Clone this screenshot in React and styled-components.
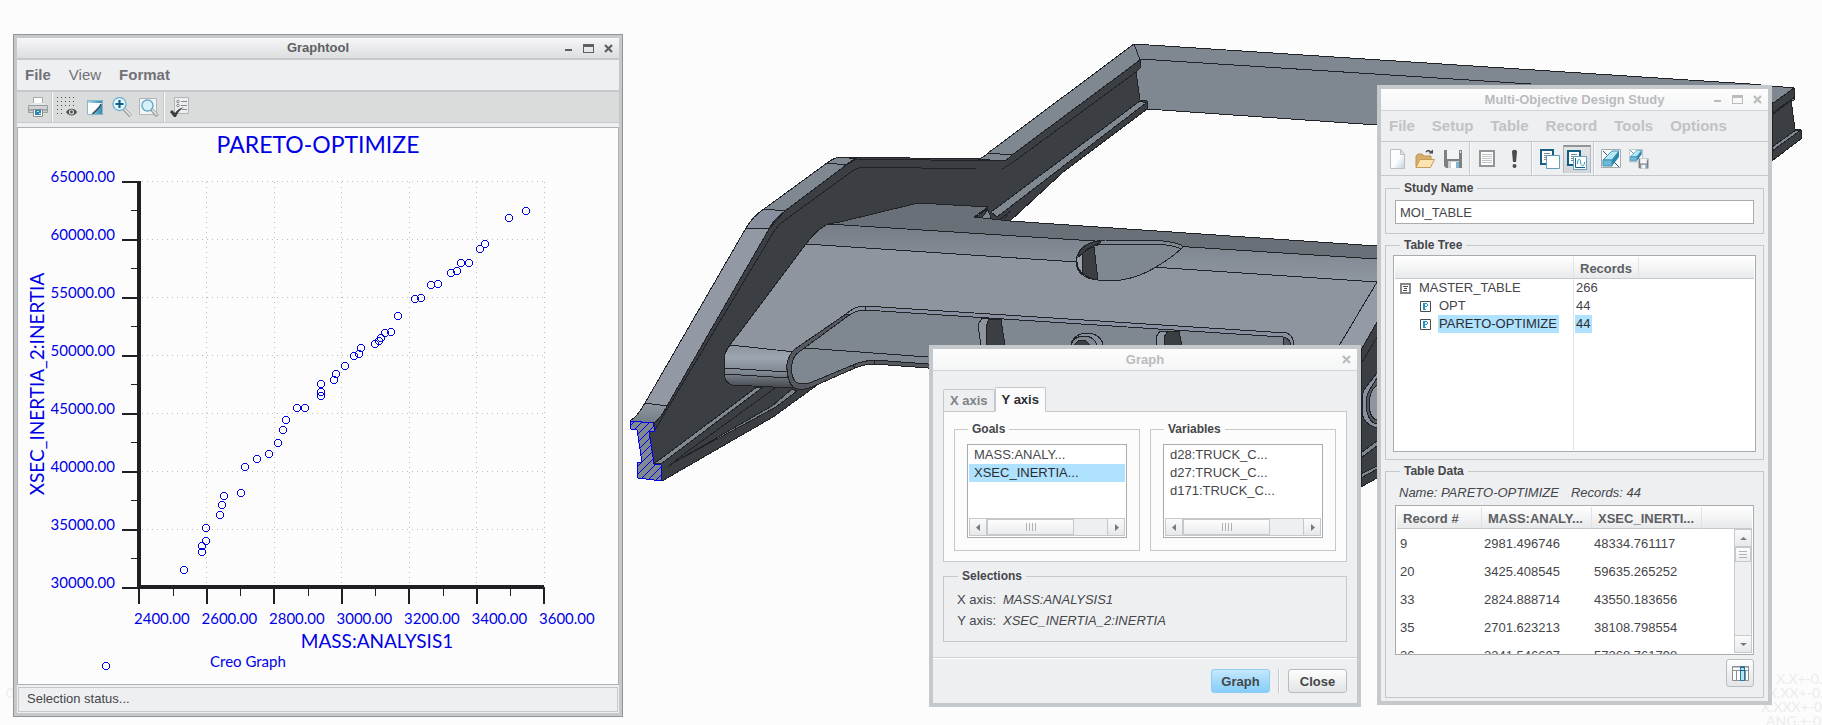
import React, { useState } from 'react';
import styled, { createGlobalStyle, css } from 'styled-components';

const GlobalStyle = createGlobalStyle`
  *, *:before, *:after {
    box-sizing: border-box;
  }

  body {
    margin: 0;
    background: #fcfcfc;
    color: #45464a;
    font-family: 'Liberation Sans', Arial, sans-serif;
    font-size: 13px;
    line-height: 18px;
  }

  button, input {
    font-family: inherit;
    color: inherit;
  }

  button {
    padding: 0;
    border: 0;
    background: none;
  }
`;

const StyledDesktop = styled.main`
  position: relative;
  min-height: 100vh;
  overflow: hidden;
`;
const StyledModel = styled.svg`
  position: absolute;
  inset: 0;
  width: 100%;
  height: 100%;

  .note {
    font-family: Lato, sans-serif;
    font-size: 14px;
    fill: #ececee;
  }
`;

/* windows */
const StyledWindow = styled.section`
  position: absolute;
  left: ${({ $left }) => $left}px;
  top: ${({ $top }) => $top}px;
  width: ${({ $width }) => $width}px;
  background: #eeeff1;
  border: 4px solid #c5c9cc;

  ${({ $active }) =>
    $active &&
    css`
      border-width: 3px;
      outline: 1px solid #929598;
    `}
`;
const StyledTitleBar = styled.header`
  display: grid;
  grid-template-columns: 1fr auto 1fr;
  align-items: center;
  height: 22px;
  border-bottom: ${({ $active }) => ($active ? '2px solid #c5c9cc' : '1px solid #d3d6d9')};
  background: ${({ $active }) =>
    $active ? 'linear-gradient(#f6f6f7, #dcdee0)' : 'linear-gradient(#fdfdfd, #f4f5f6)'};
  color: ${({ $active }) => ($active ? '#5d5f63' : '#b9bbbe')};

  h1 {
    grid-column: 2;
    margin: 0;
    font-size: 13px;
    line-height: 18px;
  }

  div {
    display: flex;
    justify-content: flex-end;
    padding-right: 1px;
  }

  button {
    display: grid;
    place-items: center;
    width: 20px;
    height: 18px;
  }
`;
const StyledMenuBar = styled.nav`
  display: flex;
  align-items: center;
  gap: ${({ $active }) => ($active ? 18 : 17)}px;
  height: ${({ $active }) => ($active ? 32 : 31)}px;
  padding-left: 8px;
  border-bottom: ${({ $active }) => ($active ? 2 : 1)}px solid #c5c9cc;
`;
const StyledMenuItem = styled.button`
  color: ${({ $dim }) => ($dim ? '#c0c2c5' : '#717276')};
  font-size: 15px;
  font-weight: ${({ $light }) => ($light ? 400 : 700)};
  line-height: 18px;
`;
const StyledToolbar = styled.div`
  display: flex;
  align-items: center;
  height: ${({ $dark }) => ($dark ? 31 : 34)}px;
  padding-left: ${({ $dark }) => ($dark ? 7 : 3)}px;
  border-bottom: 1px solid #c5c9cc;
  background: ${({ $dark }) => ($dark ? '#dadcdb' : '#eeeff1')};
`;
const StyledDivider = styled.span`
  align-self: stretch;
  width: 2px;
  margin: 0 ${({ $gap = 1 }) => $gap}px;
  border-left: 1px solid #c5c9cc;
  border-right: 1px solid #fbfbfb;
`;
const StyledTool = styled.button`
  display: grid;
  place-items: center;
  width: ${({ $wide }) => ($wide ? 28 : 27)}px;
  height: 28px;

  ${({ $pressed }) =>
    $pressed &&
    css`
      border: 1px solid #b4b7ba;
      border-top: 2px solid #929598;
      border-bottom: 0;
      background: linear-gradient(#e3e5e7, #d3d6d8);
    `}
`;
const StyledGroup = styled.fieldset`
  min-width: 0;
  margin: 0;
  padding: ${({ $pad }) => $pad};
  border: 1px solid #c5c9cc;

  legend {
    margin-left: ${({ $indent = 5 }) => $indent}px;
    padding: 0 4px;
    font-size: 12px;
    font-weight: 700;
    line-height: 14px;
  }
`;
const StyledButton = styled.button`
  min-width: 59px;
  height: 24px;
  border: 1px solid ${({ $primary }) => ($primary ? '#8fcdf3' : '#b9bcbf')};
  border-radius: 3px;
  background: ${({ $primary }) =>
    $primary ? 'linear-gradient(#c4e7fc, #85cefa)' : 'linear-gradient(#fdfdfd, #e3e4e6)'};
  font-size: 13px;
  font-weight: 700;
`;

/* graphtool */
const StyledPlot = styled.svg`
  display: block;
  width: 100%;
  margin-top: 4px;
  border: 1px solid #aeb1b4;
  background: #fcfcfc;

  text {
    font-family: Lato, sans-serif;
    font-size: 15px;
    fill: #0000e6;
  }

  .title {
    font-size: 23px;
  }

  .axis {
    font-size: 19px;
  }
`;
const StyledStatus = styled.footer`
  margin: 2px 1px 1px;
  padding: 2px 8px 3px;
  border: 1px solid #c5c9cc;
`;

/* graph dialog */
const StyledDialogBody = styled.div`
  display: flex;
  flex-direction: column;
  gap: 7px;
  padding: 16px 10px 15px;
`;
const StyledTabs = styled.div`
  display: flex;
  align-items: flex-end;
  height: 25px;
  margin-bottom: -1px;
`;
const StyledTab = styled.button`
  position: relative;
  height: ${({ $on }) => ($on ? 25 : 23)}px;
  padding: 0 6px;
  border: 1px solid #c5c9cc;
  border-bottom-color: ${({ $on }) => ($on ? '#fcfcfc' : '#c5c9cc')};
  border-radius: 2px 2px 0 0;
  background: ${({ $on }) => ($on ? '#fcfcfc' : '#eeeff1')};
  color: ${({ $on }) => ($on ? '#2b2c2f' : '#7f8185')};
  font-size: 13px;
  font-weight: 700;
`;
const StyledTabPanel = styled.div`
  display: grid;
  grid-template-columns: 1fr 1fr;
  gap: 10px;
  padding: 10px;
  border: 1px solid #c5c9cc;
  background: #fcfcfc;
`;
const StyledList = styled.div`
  display: flex;
  flex-direction: column;
  height: 94px;
  padding: 1px;
  border: 1px solid #a9acaf;
  background: #fff;

  ul {
    flex: 1;
    margin: 0;
    padding: 0;
    list-style: none;
  }
`;
const StyledListItem = styled.li`
  padding-left: 5px;
  background: ${({ $on }) => ($on ? '#afe2ff' : 'transparent')};
  color: ${({ $on }) => ($on ? '#2b2c2f' : 'inherit')};
`;
const StyledScroll = styled.div`
  display: flex;
  flex-direction: ${({ $vertical }) => ($vertical ? 'column' : 'row')};
  border: 1px solid #c5c9cc;
  background: #eeeff1;

  > button {
    display: grid;
    place-items: center;
    flex: 0 0 16px;
    min-height: 16px;
    background: linear-gradient(#fafafb, #e6e8ea);
  }

  > div {
    flex: 1;
    border: solid #c5c9cc;
    border-width: ${({ $vertical }) => ($vertical ? '1px 0' : '0 1px')};
  }

  > div > span {
    display: grid;
    place-items: center;
    width: ${({ $vertical }) => ($vertical ? '100%' : '87px')};
    height: ${({ $vertical }) => ($vertical ? '15px' : '100%')};
    border: 1px solid #c5c9cc;
    background: linear-gradient(#fdfdfd, #ebecee);
  }
`;
const StyledSelections = styled.dl`
  display: grid;
  grid-template-columns: 39px 1fr;
  column-gap: 7px;
  margin: 0;
  line-height: 21px;
  white-space: nowrap;

  dt {
    justify-self: end;
  }

  dd {
    margin: 0;
    font-style: italic;
  }
`;
const StyledDialogFooter = styled.footer`
  display: flex;
  justify-content: flex-end;
  gap: 8px;
  padding: 11px 10px 10px;
  border-top: 1px solid #d0d3d6;
  box-shadow: inset 0 1px #fff;
`;

/* design study */
const StyledStudyBody = styled.div`
  display: flex;
  flex-direction: column;
  gap: 4px;
  padding: 5px 4px 3px;
`;
const StyledInput = styled.input`
  display: block;
  width: 100%;
  height: 24px;
  padding: 0 4px;
  border: 1px solid #a9acaf;
  background: #fff;
  font-size: 13px;
`;
const StyledTableBox = styled.div`
  position: relative;
  height: ${({ $height }) => $height}px;
  overflow: hidden;
  padding: 1px;
  border: 1px solid #a9acaf;
  background: #fff;

  table {
    width: 100%;
    border-collapse: separate;
    border-spacing: 0;
    table-layout: fixed;
  }

  th {
    height: 22px;
    padding: 2px 6px 0;
    border-bottom: 1px solid #c5c9cc;
    background: linear-gradient(#fff, #e8e9eb);
    color: #5d5f63;
    text-align: left;
    white-space: nowrap;
    line-height: 18px;
  }

  th + th {
    border-left: 1px solid #e0e2e4;
  }
`;
const StyledScrollSlot = styled.div`
  position: absolute;
  top: 23px;
  right: 1px;
  bottom: 1px;
  display: grid;
  width: 18px;
`;
const StyledTreeTable = styled.table`
  height: 100%;

  td {
    height: 18px;
    padding: 0;
    line-height: 18px;
    white-space: nowrap;
  }

  td + td {
    padding-left: 1px;
    border-left: 1px solid #e0e2e4;
  }

  tr:last-child td {
    height: auto;
  }
`;
const StyledNode = styled.div`
  display: flex;
  align-items: center;
  gap: 7px;
  padding-left: ${({ $depth }) => 5 + $depth * 20}px;
`;
const StyledMark = styled.span`
  display: inline-block;
  padding: 0 2px 0 1px;
  background: ${({ $on }) => ($on ? '#afe2ff' : 'transparent')};
  color: ${({ $on }) => ($on ? '#2b2c2f' : 'inherit')};
`;
const StyledDataTable = styled.table`
  td {
    height: 28px;
    padding: 1px 3px 0;
  }
`;
const StyledCaption = styled.p`
  display: flex;
  gap: 12px;
  margin: 0 0 3px 4px;
  font-style: italic;
`;
const StyledColumnsButton = styled(StyledButton)`
  display: grid;
  place-items: center;
  min-width: 28px;
  height: 28px;
  margin: 4px 0 0 auto;
`;

const yTicks = ['65000.00', '60000.00', '55000.00', '50000.00', '45000.00', '40000.00', '35000.00', '30000.00'];
const xTicks = ['2400.00', '2600.00', '2800.00', '3000.00', '3200.00', '3400.00', '3600.00'];
const points = [
  [526, 211], [509, 218], [485, 244], [480, 249], [469, 263], [461, 263], [457, 271], [451, 273],
  [438, 284], [431, 285], [421, 298], [415, 299], [398, 316], [391, 332], [385, 333], [381, 338],
  [379, 341], [375, 344], [361, 348], [359, 354], [354, 356], [345, 366], [336, 374], [334, 380],
  [321, 384], [321, 392], [321, 396], [305, 408], [297, 408], [286, 420], [283, 430], [278, 443],
  [269, 454], [257, 459], [245, 467], [241, 493], [224, 496], [222, 505], [220, 515], [206, 528],
  [206, 541], [202, 546], [202, 552], [184, 570],
];
const goals = ['MASS:ANALY...', 'XSEC_INERTIA...'];
const variables = ['d28:TRUCK_C...', 'd27:TRUCK_C...', 'd171:TRUCK_C...'];
const tree = [
  { name: 'MASTER_TABLE', records: 266, depth: 0 },
  { name: 'OPT', records: 44, depth: 1 },
  { name: 'PARETO-OPTIMIZE', records: 44, depth: 1, on: true },
];
const records = [
  ['9', '2981.496746', '48334.761117'],
  ['20', '3425.408545', '59635.265252'],
  ['33', '2824.888714', '43550.183656'],
  ['35', '2701.623213', '38108.798554'],
  ['36', '3341.546607', '57268.761798'],
];

/* icons, all on a 20px grid */
const Icon = ({ children, size = 20 }) => (
  <svg width={size} height={size} viewBox={`0 0 ${size} ${size}`} fill="none" aria-hidden="true">
    {children}
  </svg>
);
const PrintIcon = () => (
  <Icon>
    <path d="M5.5 .5h9v7h-9z" fill="#fdfdfd" stroke="#a5a8ab" />
    <path d="M3 6h14v3H3z" fill="#e4e6e7" />
    <path d="M.5 8.5h19v7H.5z" fill="#cfd2d4" stroke="#9b9ea1" />
    <path d="M1 12h18v2H1z" fill="#a5a8aa" />
    <path d="M5.500 12.500h9v7h-9z" fill="#fff" stroke="#8b8e91" />
    <path d="M7 13h6v5H7z" fill="#2e86ab" />
    <path d="M9 14h2v1H9zM11 16h2v1h-2z" fill="#bfe6f5" />
  </Icon>
);
const GridIcon = () => (
  <Icon>
    {[0, 1, 2, 3, 4].map(r =>
      [0, 1, 2, 3, 4].map(c =>
        r > 2 && c > 1 ? null : (
          <rect key={`${r}-${c}`} x={c * 4} y={r * 4} width="1" height="1" fill="#4a4b4e" />
        )
      )
    )}
    <path d="M9 15c2.500-4.500 9-4.500 11 0c-2 4.500-8.500 4.500-11 0z" fill="#4a4b4e" />
    <circle cx="14.500" cy="15" r="2.600" fill="#dadcdb" />
    <circle cx="14.500" cy="15" r="1.400" fill="#4a4b4e" />
  </Icon>
);
const RepaintIcon = () => (
  <Icon>
    <defs>
      <linearGradient id="repaint" x1="0" x2="1">
        <stop offset="0" stopColor="#aee0f4" />
        <stop offset="1" stopColor="#2d86ad" />
      </linearGradient>
    </defs>
    <path d="M2 3h16v15H2z" fill="url(#repaint)" />
    <path d="M2 6h15c-1 5-5 7-9 11l-1 1H2z" fill="#fafcfd" />
    <path d="M16 7c-1 5-6 6-9 11" stroke="#2b4d5e" strokeWidth="1.500" />
    <path d="M2.500 3.500h15v14h-15z" stroke="#8fb5c5" />
  </Icon>
);
const ZoomInIcon = () => (
  <Icon>
    <path d="M12 12l6.500 7" stroke="#9b9ea1" strokeWidth="3.500" />
    <path d="M12.500 12l6 6.500" stroke="#e8e9ea" strokeWidth="1.500" />
    <circle cx="7.500" cy="7" r="6.500" fill="#e6f5fb" stroke="#6fb1cc" strokeWidth="1.300" />
    <path d="M7.500 3v8M3.500 7h8" stroke="#0f5f86" strokeWidth="2.200" />
  </Icon>
);
const RefitIcon = () => (
  <Icon>
    <path d="M.5 1.500h17v16H.5z" fill="#f4f5f6" stroke="#b1b4b6" />
    <path d="M12.500 12.500l6 6.500" stroke="#9b9ea1" strokeWidth="3.500" />
    <path d="M13 12.500l5 5.500" stroke="#e8e9ea" strokeWidth="1.500" />
    <circle cx="8.500" cy="8.500" r="5.500" fill="#d9f0f9" stroke="#63abc9" strokeWidth="1.400" />
  </Icon>
);
const OptionsIcon = () => (
  <Icon>
    <path d="M4.500 .5h14v16h-14z" fill="#eceef0" stroke="#b1b4b6" />
    <circle cx="8" cy="4.500" r="1.300" stroke="#85888b" />
    <circle cx="8" cy="8.500" r="1.300" stroke="#85888b" />
    <path d="M11 4.500h6M11 8.500h6M12 12.500h5" stroke="#85888b" />
    <path d="M0 15l2-2l3 3c2-3 5-5 9-6c-4 3-6 5-8 10H4z" fill="#3b3c3f" />
  </Icon>
);
const NewIcon = () => (
  <Icon>
    <defs>
      <linearGradient id="page" x1="0" y1="0" x2="1" y2="1">
        <stop offset="0" stopColor="#fff" />
        <stop offset=".55" stopColor="#fbfcfd" />
        <stop offset="1" stopColor="#bccfd9" />
      </linearGradient>
    </defs>
    <path d="M2.500 .5h10l4 5v14h-14z" fill="url(#page)" stroke="#b9bfc4" />
    <path d="M12.500 .5v5h4z" fill="#e4e8eb" stroke="#b9bfc4" />
  </Icon>
);
const OpenIcon = () => (
  <Icon>
    <path d="M1 18V7l2-2h4l2 2h7v3" fill="#d8ae6c" stroke="#bf914c" />
    <path d="M1 18.500l4-8h14.500l-4 8z" fill="#fbe3b4" stroke="#c79c58" />
    <path d="M11 3c2-2 4-1.500 5 1" stroke="#4a4b4e" strokeWidth="1.500" />
    <path d="M13.500 4.500h4.500v-4z" fill="#4a4b4e" />
  </Icon>
);
const Disk = () => (
  <>
    <path d="M1 1h18v18H3l-2-2z" fill="#7e8183" />
    <path d="M4 1h12v9H4z" fill="#f3f4f5" />
    <path d="M17 2h1v2h-1z" fill="#fff" />
    <path d="M5 12h11v7H5z" fill="#cfd2d4" />
    <path d="M8 13h5v6H8z" fill="#fff" />
    <path d="M13 13h3v6h-3z" fill="#7fb7d0" />
  </>
);
const SaveIcon = () => (
  <Icon>
    <Disk />
  </Icon>
);
const SheetIcon = () => (
  <Icon>
    <path d="M3 2h14v15H3z" fill="#fdfdfd" stroke="#929496" strokeWidth="2" />
    <path d="M5 5.500h10M5 7.500h10M5 9.500h10M5 11.500h10M5 13.500h10" stroke="#c3c5c7" />
  </Icon>
);
const RunIcon = () => (
  <Icon>
    <path d="M8 3c0-3 5-3 5 0l-1 10h-3z" fill="#4a4b4e" />
    <circle cx="10.500" cy="17" r="2" fill="#4a4b4e" />
  </Icon>
);
const TableBack = () => (
  <>
    <path d="M1 1h12v14H1z" fill="#fff" stroke="#135e82" strokeWidth="2" />
    <path d="M4 4.500h6M4 6.500h6M4 8.500h3M4 10.500h3" stroke="#85888b" />
  </>
);
const TablesIcon = () => (
  <Icon>
    <TableBack />
    <path d="M6.500 6.500h13v13h-13z" fill="#fff" stroke="#5f9fbe" />
  </Icon>
);
const TableGraphIcon = () => (
  <Icon>
    <TableBack />
    <path d="M6.500 6.500h13v13h-13z" fill="#fff" stroke="#5f9fbe" />
    <path d="M8.500 8v9.500H18" stroke="#135e82" />
    <path d="M10.500 14c0-6 3-6 3-2s4 6 4 0" stroke="#2e9ac4" />
  </Icon>
);
const Cube = () => (
  <>
    <path d="M.5 .5h19v18H.5z" fill="#fcfdfd" stroke="#a6a9ac" />
    <path d="M2 2l5 5M12 12l6 6" stroke="#1d5a76" />
    <path d="M2 11l9-9h7l-7 9z" fill="#b6e8f8" stroke="#3b8fb3" />
    <path d="M11 11l7-9v6l-7 9z" fill="#2f86ad" />
    <path d="M2 11h9v6H2z" fill="#6db9d8" stroke="#3b8fb3" />
  </>
);
const CubeIcon = () => (
  <Icon>
    <Cube />
  </Icon>
);
const CubeSaveIcon = () => (
  <Icon>
    <g transform="scale(.7)">
      <Cube />
    </g>
    <g transform="translate(9 9) scale(.55)">
      <Disk />
    </g>
  </Icon>
);
const ColumnsIcon = () => (
  <svg width="17" height="15" fill="none" aria-hidden="true">
    <path d="M.5 .5h16v14H.5z" fill="#fff" stroke="#8b8d90" />
    <path d="M0 1h17M0 4.500h17M4.500 4v10M13.500 4v10" stroke="#8b8d90" />
    <path d="M8.500 1.500h4v13h-4z" fill="#b9e2f4" stroke="#1b7ba5" />
    <path d="M8 4.500h5M8 1h5" stroke="#135e82" />
  </svg>
);
const MasterIcon = () => (
  <svg width="11" height="11" fill="none" aria-hidden="true">
    <path d="M1 1h9v9H1z" fill="#fff" stroke="#85878a" strokeWidth="2" />
    <path d="M3 3.500h5M4 5.500h3M3 7.500h4" stroke="#4a4b4e" />
  </svg>
);
const ParetoIcon = () => (
  <svg width="11" height="11" fill="none" aria-hidden="true">
    <path d="M.5 .5h10v10H.5z" fill="#fff" stroke="#4a4b4e" />
    <path d="M4 2v7" stroke="#1f96c4" strokeWidth="2" />
    <path d="M3 2.500h4M5 5.500h2M3 8.500h3M7.500 3v2" stroke="#1f96c4" />
  </svg>
);

const Controls = ({ closeOnly }) => (
  <div>
    {!closeOnly && (
      <>
        <button type="button" aria-label="Minimize">
          <svg width="9" height="9">
            <path d="M1 5h7v2H1z" fill="currentColor" />
          </svg>
        </button>
        <button type="button" aria-label="Maximize">
          <svg width="11" height="9">
            <path d="M0 0h11v9H0zM1 3v5h9V3z" fill="currentColor" fillRule="evenodd" />
          </svg>
        </button>
      </>
    )}
    <button type="button" aria-label="Close window">
      <svg width="9" height="9">
        <path d="M1 1l7 7M8 1L1 8" stroke="currentColor" strokeWidth="2.200" />
      </svg>
    </button>
  </div>
);

const arrows = {
  left: 'M6 1v7L2 4.500z',
  right: 'M3 1v7l4-3.500z',
  up: 'M1 6h7L4.500 3z',
  down: 'M1 3h7L4.500 6z',
};
const Arrow = ({ to }) => (
  <button type="button" aria-label={`Scroll ${to}`}>
    <svg width="9" height="9">
      <path d={arrows[to]} fill="#77797c" />
    </svg>
  </button>
);
const ScrollBar = ({ vertical }) => (
  <StyledScroll $vertical={vertical}>
    <Arrow to={vertical ? 'up' : 'left'} />
    <div>
      <span>
        <svg width="12" height="10">
          <path
            d={vertical ? 'M2 1.500h8M2 4.500h8M2 7.500h8' : 'M1.500 1v8M4.500 1v8M7.500 1v8M10.500 1v8'}
            stroke="#b0b3b6"
          />
        </svg>
      </span>
    </div>
    <Arrow to={vertical ? 'down' : 'right'} />
  </StyledScroll>
);

const Model = () => (
  <StyledModel viewBox="0 0 1822 725" preserveAspectRatio="xMinYMin slice" aria-hidden="true">
    <defs>
      <linearGradient id="band" x1="0" y1="0" x2="-.04" y2="1">
        <stop offset="0" stopColor="#767d86" />
        <stop offset="1" stopColor="#9098a2" />
      </linearGradient>
      <linearGradient id="tube" x1="0" y1="0" x2="0" y2="1">
        <stop offset="0" stopColor="#8c949e" />
        <stop offset=".3" stopColor="#9ca5b0" />
        <stop offset=".65" stopColor="#7d858f" />
        <stop offset="1" stopColor="#43464b" />
      </linearGradient>
      <linearGradient id="bend" x1="0" y1="0" x2="0" y2="1">
        <stop offset="0" stopColor="#8f97a2" />
        <stop offset="1" stopColor="#747c85" />
      </linearGradient>
      <pattern id="hatch" width="8" height="8" patternUnits="userSpaceOnUse">
        <path d="M0 0h8v8H0z" fill="#808890" />
        <path d="M-1 9L9-1" stroke="#0000e6" />
      </pattern>
    </defs>
    <g stroke="#202225" strokeWidth="1" strokeLinejoin="round" shapeRendering="crispEdges">
      {/* rear beam */}
      <path d="M1134 44L1750 84L1794 88V100L1772 103L1377 125L1147 109L1139 100L1135 72L1140 60z" fill="#7f8790" />
      <path d="M1140 59L1531 84" fill="none" />
      <path d="M1772 104L1794 88L1795 97L1791 100L1795 129L1801 130L1802 138L1772 161z" fill="#3b3e42" />
      <path d="M1795 97L1772 113M1792 100L1772 115" fill="none" />
      <path d="M1801 130H1796L1772 147V151z" fill="#7f8790" />
      {/* side rail web */}
      <path
        d="M1140 60L1141 67L1136 72L1140 100L1147 101L1147 109L1118 131L1062 173L1010 221L974 217L988 207L918 203L840 222L828 224Q817 229 806 244L730 345Q724 352 724 362V373Q725 382 732 385L793 388L820 383L773 417L662 481L661 465L654 463L649 431L655 430L654 423L667 406L769 229Q774 219 785 211L846 165L857 159L1002 161L1012 155z"
        fill="#3b3e42"
      />
      <path d="M655 430L662 418L773 233Q778 225 785 220L851 172Q858 167 865 167L976 169L1002 169L1012 163L1136 72" fill="none" />
      {/* flange */}
      <path d="M1134 44L1140 60L1012 155Q1007 161 1002 161L978 159Q983 158 988 153z" fill="#7f8790" />
      <path d="M841 157L978 159L1002 161L857 159Q851 160 846 165L785 211Q775 218 769 229L827 163Q833 158 841 157z" fill="#3b3e42" />
      <path d="M841 157Q833 158 827 163L764 209L785 211L846 165Q851 160 857 159z" fill="#7f8790" />
      <path d="M764 209Q753 216 746 228L769 229Q774 219 785 211z" fill="#8890a0" />
      <path d="M746 228L645 403L667 406L769 229z" fill="#9299a5" />
      <path d="M645 403Q638 416 630 421L654 423Q661 418 667 406z" fill="url(#bend)" />
      <path d="M988 153L1012 155M827 163L846 165" />
      {/* lower flange strips */}
      <path d="M1140 101L1146 103L997 217L991 212z" fill="#7f8790" />
      <path d="M974 217L987 208L992 220z" fill="#7f8790" />
      <path d="M975 218L987 209L985 214L980 219z" fill="#3b3e42" />
      <path d="M1000 219L1011 211M1004 219L1008 215" />
      <path d="M757 387L763 387L661 464L655 463z" fill="#7f8790" />
      <path d="M775 388L680 457L668 467" fill="none" />
      <path d="M792 389L797 391L776 407L673 463L772 406z" fill="#7a8385" />
      <path d="M793 388L820 383" />
      {/* cross plate */}
      <path d="M828 224L840 222L918 203L988 207L974 217L1010 221L1377 246V259z" fill="#697077" />
      <path d="M828 224L1377 259V282L806 244Q817 229 828 224z" fill="url(#band)" />
      <path d="M806 244L1377 282V322L1361 349L928 349L795 352L730 345z" fill="#8e959f" stroke="none" />
      <path d="M1377 282L1339 346H1362L1377 322z" fill="#949ba7" stroke="none" />
      <path d="M806 244L1377 282M1377 282L1339 346M806 244L730 345" fill="none" />
      <path d="M1377 322L1361 350V487L1377 478z" fill="#3b3e42" />
      <path d="M1377 337L1361 364" />
      <path d="M1377 373L1366 387Q1362 392 1362 400V412Q1363 424 1377 428z" fill="#8890a0" />
      <path d="M1377 378L1370 389Q1366 395 1366 404Q1367 422 1377 424z" fill="#55595f" />
      <path d="M1377 385Q1369 391 1369 405Q1370 419 1377 420z" fill="#8e959f" />
      <path d="M1361 453L1377 441V446L1361 458zM1361 474L1377 466V469L1361 478z" fill="#7f8790" />
      {/* tube */}
      <path d="M730 345L795 352L788 370L790 383L793 388L732 385Q724 382 724 373V358Q725 352 730 345z" fill="url(#tube)" />
      <path d="M724 368L788 372M725 374L789 378" />
      {/* pocket */}
      <path
        d="M865 306L1220 329L1287 333Q1294 336 1294 346V368H928L874 364Q865 364 855 368L812 387Q800 392 793 387Q786 378 787 364Q789 354 795 349L846 314Q855 306 865 306z"
        fill="#55595f"
      />
      <path
        d="M865 306L1287 333Q1294 336 1294 346H1291Q1290 338 1283 337L1220 333L865 310Q857 311 852 315L846 314Q855 306 865 306z"
        fill="#8890a0"
      />
      <path
        d="M865 310L1220 333L1283 337V364H928L874 360Q862 361 853 365L812 382Q802 386 796 382Q790 376 792 364Q793 356 799 352L848 316Q856 310 865 310z"
        fill="#7f8790"
      />
      <path d="M805 348L928 357M865 306V310M874 360V364M853 365L855 368" />
      <path d="M978 325L982 318L1001 319L1005 346H981z" fill="#8e959f" />
      <path d="M986 326L989 319H1001L1005 346H987z" fill="#3b3e42" />
      <path d="M1156 337L1160 331L1179 331L1182 346H1157z" fill="#8e959f" />
      <path d="M1164 337L1168 331H1179L1182 346H1165z" fill="#3b3e42" />
      <ellipse cx="1087" cy="346" rx="16" ry="13" fill="#8890a0" />
      <ellipse cx="1084" cy="347" rx="13" ry="11" fill="#7f8790" />
      <ellipse cx="1082" cy="348" rx="8" ry="8" fill="#3b3e42" />
      {/* opening in the plate */}
      <path
        d="M1076 262Q1077 242 1105 240L1163 241Q1181 243 1183 247Q1173 257 1156 267Q1140 277 1121 280H1098Q1077 278 1076 262z"
        fill="#7f8790"
      />
      <path d="M1078 256Q1082 242 1100 241V243Q1086 248 1082 254z" fill="#3b3e42" />
      <path d="M1077 258L1082 254Q1084 264 1082 273Q1076 267 1077 258z" fill="#99a1ac" />
      <path d="M1082 254Q1087 249 1094 247L1098 280Q1090 279 1082 273Q1084 263 1082 254z" fill="#3b3e42" />
      <path d="M1087 249Q1095 244 1110 244H1156Q1174 245 1181 249" fill="none" />
      {/* cut section */}
      <path
        d="M630 421L653 423L655 431H649L654 464L661 465L662 481L638 478L637 463L642 462L637 430L631 429z"
        fill="url(#hatch)"
        stroke="#0000e6"
      />
    </g>
    <text className="note" x="6" y="698">0</text>
    <text className="note" x="1776" y="684">X.X+-0.1</text>
    <text className="note" x="1768" y="698">X.XX+-0.</text>
    <text className="note" x="1761" y="712">X.XXX+-0.</text>
    <text className="note" x="1766" y="726">ANG.+-0.5</text>
  </StyledModel>
);

const Plot = () => (
  <StyledPlot viewBox="18 128 600 556" role="img" aria-label="Pareto graph">
    <text className="title" x="318" y="153" textAnchor="middle">
      PARETO-OPTIMIZE
    </text>
    <g stroke="#bdbdbd" strokeDasharray="1 4" shapeRendering="crispEdges">
      {yTicks.slice(0, -1).map((t, i) => (
        <path key={t} d={`M142 ${181.5 + i * 58}H544`} />
      ))}
      {xTicks.slice(1).map((t, i) => (
        <path key={t} d={`M${206.5 + i * 67.5} 182V604`} />
      ))}
    </g>
    <g stroke="#202024" strokeWidth="2" shapeRendering="crispEdges">
      {yTicks.map((t, i) => (
        <path key={t} d={`M122 ${182 + i * 58}h17`} />
      ))}
      {xTicks.map((t, i) => (
        <path key={t} d={`M${139 + i * 67.5} 587v17`} />
      ))}
      <path d="M139 181V589" strokeWidth="4" />
      <path d="M137 587H544" strokeWidth="4" />
    </g>
    <g stroke="#202024" shapeRendering="crispEdges">
      {yTicks.slice(1).map((t, i) => (
        <path key={t} d={`M131 ${210.5 + i * 58}h8`} />
      ))}
      {xTicks.slice(1).map((t, i) => (
        <path key={t} d={`M${173 + i * 67.5} 587v9`} />
      ))}
    </g>
    {yTicks.map((t, i) => (
      <text key={t} x="115" y={182 + i * 58} textAnchor="end">
        {t}
      </text>
    ))}
    {xTicks.map((t, i) => (
      <text key={t} x={134 + i * 67.5} y="624">
        {t}
      </text>
    ))}
    <g fill="none" stroke="#0000e6" shapeRendering="crispEdges">
      {points.map(([x, y]) => (
        <circle key={`${x}-${y}`} cx={x} cy={y} r="3.500" />
      ))}
      <circle cx="106" cy="666" r="3.500" />
    </g>
    <text className="axis" x="377" y="648" textAnchor="middle">
      MASS:ANALYSIS1
    </text>
    <text className="axis" x="44" y="384" textAnchor="middle" transform="rotate(-90 44 384)">
      XSEC_INERTIA_2:INERTIA
    </text>
    <text x="210" y="667">
      Creo Graph
    </text>
  </StyledPlot>
);

const GraphTool = () => (
  <StyledWindow $left={14} $top={35} $width={608} $active>
    <StyledTitleBar $active>
      <h1>Graphtool</h1>
      <Controls />
    </StyledTitleBar>
    <StyledMenuBar $active>
      <StyledMenuItem type="button">File</StyledMenuItem>
      <StyledMenuItem type="button" $light>
        View
      </StyledMenuItem>
      <StyledMenuItem type="button">Format</StyledMenuItem>
    </StyledMenuBar>
    <StyledToolbar $dark>
      <StyledTool type="button" aria-label="Print"><PrintIcon /></StyledTool>
      <StyledDivider $gap={0} />
      <StyledTool $wide type="button" aria-label="Grid"><GridIcon /></StyledTool>
      <StyledTool type="button" aria-label="Repaint"><RepaintIcon /></StyledTool>
      <StyledTool type="button" aria-label="Zoom in"><ZoomInIcon /></StyledTool>
      <StyledTool type="button" aria-label="Refit"><RefitIcon /></StyledTool>
      <StyledDivider />
      <StyledTool type="button" aria-label="Graph options"><OptionsIcon /></StyledTool>
    </StyledToolbar>
    <Plot />
    <StyledStatus>Selection status...</StyledStatus>
  </StyledWindow>
);

const PickList = ({ title, items, picked, onPick }) => (
  <StyledGroup $pad="8px 12px 12px" $indent={1}>
    <legend>{title}</legend>
    <StyledList>
      <ul>
        {items.map((item, i) => (
          <StyledListItem key={item} $on={i === picked} onClick={() => onPick && onPick(i)}>
            {item}
          </StyledListItem>
        ))}
      </ul>
      <ScrollBar />
    </StyledList>
  </StyledGroup>
);

const GraphDialog = () => {
  const [tab, setTab] = useState('Y axis');
  const [goal, setGoal] = useState(1);

  return (
    <StyledWindow $left={929} $top={345} $width={432}>
      <StyledTitleBar>
        <h1>Graph</h1>
        <Controls closeOnly />
      </StyledTitleBar>
      <StyledDialogBody>
        <div>
          <StyledTabs role="tablist">
            {['X axis', 'Y axis'].map(name => (
              <StyledTab
                key={name}
                type="button"
                role="tab"
                aria-selected={tab === name}
                $on={tab === name}
                onClick={() => setTab(name)}>
                {name}
              </StyledTab>
            ))}
          </StyledTabs>
          <StyledTabPanel>
            <PickList title="Goals" items={goals} picked={goal} onPick={setGoal} />
            <PickList title="Variables" items={variables} />
          </StyledTabPanel>
        </div>
        <StyledGroup $pad="6px 13px 10px" $indent={1}>
          <legend>Selections</legend>
          <StyledSelections>
            <dt>X axis:</dt>
            <dd>MASS:ANALYSIS1</dd>
            <dt>Y axis:</dt>
            <dd>XSEC_INERTIA_2:INERTIA</dd>
          </StyledSelections>
        </StyledGroup>
      </StyledDialogBody>
      <StyledDialogFooter>
        <StyledButton type="button" $primary>
          Graph
        </StyledButton>
        <StyledDivider $gap={0} />
        <StyledButton type="button">Close</StyledButton>
      </StyledDialogFooter>
    </StyledWindow>
  );
};

const DesignStudy = () => {
  const [name, setName] = useState('MOI_TABLE');

  return (
    <StyledWindow $left={1377} $top={85} $width={395}>
      <StyledTitleBar>
        <h1>Multi-Objective Design Study</h1>
        <Controls />
      </StyledTitleBar>
      <StyledMenuBar>
        {['File', 'Setup', 'Table', 'Record', 'Tools', 'Options'].map(item => (
          <StyledMenuItem key={item} type="button" $dim>
            {item}
          </StyledMenuItem>
        ))}
      </StyledMenuBar>
      <StyledToolbar>
        <StyledTool type="button" aria-label="New"><NewIcon /></StyledTool>
        <StyledTool $wide type="button" aria-label="Open"><OpenIcon /></StyledTool>
        <StyledTool $wide type="button" aria-label="Save"><SaveIcon /></StyledTool>
        <StyledDivider $gap={2} />
        <StyledTool type="button" aria-label="Edit table"><SheetIcon /></StyledTool>
        <StyledTool $wide type="button" aria-label="Run"><RunIcon /></StyledTool>
        <StyledDivider $gap={3} />
        <StyledTool type="button" aria-label="Derive table"><TablesIcon /></StyledTool>
        <StyledTool $wide $pressed type="button" aria-label="Graph table"><TableGraphIcon /></StyledTool>
        <StyledDivider $gap={2} />
        <StyledTool $wide type="button" aria-label="Show model"><CubeIcon /></StyledTool>
        <StyledTool $wide type="button" aria-label="Save model"><CubeSaveIcon /></StyledTool>
      </StyledToolbar>
      <StyledStudyBody>
        <StyledGroup $pad="5px 9px 9px">
          <legend id="study-name">Study Name</legend>
          <StyledInput aria-labelledby="study-name" value={name} onChange={e => setName(e.target.value)} />
        </StyledGroup>
        <StyledGroup $pad="3px 7px 7px" $indent={7}>
          <legend>Table Tree</legend>
          <StyledTableBox $height={197}>
            <StyledTreeTable>
              <colgroup>
                <col width="178" />
                <col width="65" />
                <col />
              </colgroup>
              <thead>
                <tr>
                  <th aria-label="Table" />
                  <th>Records</th>
                  <th aria-label="Spare" />
                </tr>
              </thead>
              <tbody>
                {tree.map(row => (
                  <tr key={row.name}>
                    <td>
                      <StyledNode $depth={row.depth}>
                        {row.depth ? <ParetoIcon /> : <MasterIcon />}
                        <StyledMark $on={row.on}>{row.name}</StyledMark>
                      </StyledNode>
                    </td>
                    <td colSpan="2">
                      <StyledMark $on={row.on}>{row.records}</StyledMark>
                    </td>
                  </tr>
                ))}
                <tr>
                  <td />
                  <td colSpan="2" />
                </tr>
              </tbody>
            </StyledTreeTable>
          </StyledTableBox>
        </StyledGroup>
        <StyledGroup $pad="6px 9px 10px">
          <legend>Table Data</legend>
          <StyledCaption>
            <span>Name: PARETO-OPTIMIZE</span>
            <span>Records: 44</span>
          </StyledCaption>
          <StyledTableBox $height={150}>
            <StyledDataTable>
              <colgroup>
                <col width="84" />
                <col width="110" />
                <col width="110" />
                <col />
              </colgroup>
              <thead>
                <tr>
                  <th>Record #</th>
                  <th>MASS:ANALY...</th>
                  <th>XSEC_INERTI...</th>
                  <th aria-label="Spare" />
                </tr>
              </thead>
              <tbody>
                {records.map(row => (
                  <tr key={row[0]}>
                    {row.map(cell => (
                      <td key={cell}>{cell}</td>
                    ))}
                    <td />
                  </tr>
                ))}
              </tbody>
            </StyledDataTable>
            <StyledScrollSlot>
              <ScrollBar vertical />
            </StyledScrollSlot>
          </StyledTableBox>
          <StyledColumnsButton type="button" aria-label="Columns">
            <ColumnsIcon />
          </StyledColumnsButton>
        </StyledGroup>
      </StyledStudyBody>
    </StyledWindow>
  );
};

const App = () => (
  <StyledDesktop>
    <GlobalStyle />
    <Model />
    <GraphTool />
    <GraphDialog />
    <DesignStudy />
  </StyledDesktop>
);

export default App;
